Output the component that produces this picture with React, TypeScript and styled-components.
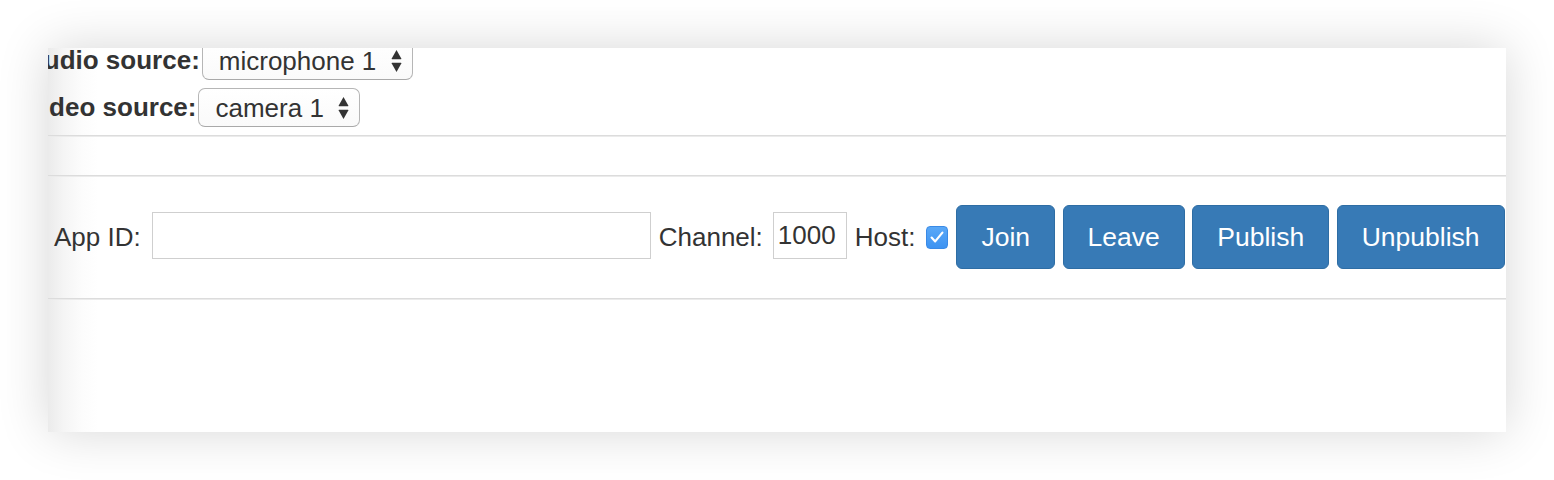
import React from "react";
import styled, { createGlobalStyle } from "styled-components";

const GlobalStyle = createGlobalStyle`
  html, body { margin: 0; padding: 0; background: #fff; }
  body {
    font-family: "Liberation Sans", Arial, Helvetica, sans-serif;
    color: #333;
  }
  * { box-sizing: border-box; }
`;

const Stage = styled.div`
  width: 1554px;
  height: 480px;
  padding: 48px;
  background: #fff;
  overflow: hidden;
`;

const Window = styled.div`
  width: 1458px;
  height: 384px;
  overflow: hidden;
  background: linear-gradient(to right, #ebebeb 0px, #f5f5f5 16px, #fcfcfc 34px, #fff 50px);
  box-shadow: 0 0 48px rgba(0, 0, 0, 0.16);
`;

const Sources = styled.section`
  display: flex;
  flex-direction: column;
  gap: 8px;
  margin: -7px 0 0 -23px;
  padding-bottom: 8px;
`;

const SourceRow = styled.div`
  display: flex;
  align-items: center;
`;

const SourceLabel = styled.label`
  font-weight: 700;
  font-size: 26px;
  white-space: nowrap;
  margin-right: 2px;
`;

const SelectBox = styled.div`
  display: inline-flex;
  align-items: center;
  height: 39px;
  padding: 0 10px 0 16px;
  gap: 14px;
  border: 1px solid #b6b6b6;
  border-bottom-color: #a9a9a9;
  border-radius: 7px;
  background: linear-gradient(#ffffff, #fafafa);
`;

const NativeSelect = styled.select`
  appearance: none;
  -webkit-appearance: none;
  border: 0;
  margin: 0;
  padding: 0;
  background: transparent;
  font-family: inherit;
  font-size: 26px;
  color: #333;
  outline: none;
`;

const Divider = styled.hr`
  margin: 0;
  height: 0;
  border: 0;
  border-top: 1px solid #dcdcdc;
  border-bottom: 1px solid #ebebeb;
`;

const Blank = styled.div<{ $h: number }>`
  height: ${(p) => p.$h}px;
`;

const Controls = styled.div`
  display: flex;
  align-items: center;
  padding: 28px 0 29px 6px;
  font-size: 26px;
  white-space: nowrap;
`;

const FieldLabel = styled.label`
  margin: 0 10px 0 8px;
  &:first-child {
    margin-left: 0;
    margin-right: 11px;
  }
`;

const TextInput = styled.input<{ $w: number }>`
  width: ${(p) => p.$w}px;
  height: 47px;
  margin: 0 0 3px 0;
  padding: 0 4px;
  border: 1px solid #cfcfcf;
  border-radius: 0;
  background: #fff;
  font-family: inherit;
  font-size: 26px;
  color: #333;
  outline: none;
`;

const Check = styled.span`
  display: inline-flex;
  align-items: center;
  justify-content: center;
  width: 22px;
  height: 23px;
  margin-left: 1px;
  border-radius: 4px;
  background: linear-gradient(#5aa8f7, #3d93f2);
  border: 1px solid #3a8ae6;
`;

const Buttons = styled.div`
  display: flex;
  gap: 7.5px;
  margin-left: 8px;
`;

const Button = styled.button`
  height: 64px;
  padding: 0 24px;
  border: 1px solid #2e6da4;
  border-radius: 6px;
  background: #377ab6;
  color: #fff;
  font-family: inherit;
  font-size: 26.5px;
  cursor: pointer;
`;

const Arrows = () => (
  <svg width="11" height="24" viewBox="0 0 11 24" aria-hidden="true">
    <path d="M5.5 1 L10.3 9.6 Q10.6 10.2 9.9 10.2 L1.1 10.2 Q0.4 10.2 0.7 9.6 Z" fill="#333" />
    <path d="M5.5 23 L10.3 14.4 Q10.6 13.8 9.9 13.8 L1.1 13.8 Q0.4 13.8 0.7 14.4 Z" fill="#333" />
  </svg>
);

const CheckMark = () => (
  <svg width="18" height="18" viewBox="0 0 18 18" aria-hidden="true">
    <path d="M3.6 9.6 L7.2 13.4 L14.4 4.6" fill="none" stroke="#fff" strokeWidth="2.2" strokeLinecap="round" strokeLinejoin="round" />
  </svg>
);

export default function App() {
  return (
    <>
      <GlobalStyle />
      <Stage>
        <Window>
          <Sources>
            <SourceRow>
              <SourceLabel>Audio source:</SourceLabel>
              <SelectBox>
                <NativeSelect defaultValue="mic1">
                  <option value="mic1">microphone 1</option>
                </NativeSelect>
                <Arrows />
              </SelectBox>
            </SourceRow>
            <SourceRow>
              <SourceLabel>Video source:</SourceLabel>
              <SelectBox>
                <NativeSelect defaultValue="cam1">
                  <option value="cam1">camera 1</option>
                </NativeSelect>
                <Arrows />
              </SelectBox>
            </SourceRow>
          </Sources>
          <Divider />
          <Blank $h={38} />
          <Divider />
          <Controls>
            <FieldLabel>App ID:</FieldLabel>
            <TextInput $w={499} type="text" defaultValue="" />
            <FieldLabel>Channel:</FieldLabel>
            <TextInput $w={74} type="text" defaultValue="1000" />
            <FieldLabel>Host:</FieldLabel>
            <Check>
              <CheckMark />
            </Check>
            <Buttons>
              <Button>Join</Button>
              <Button>Leave</Button>
              <Button>Publish</Button>
              <Button>Unpublish</Button>
            </Buttons>
          </Controls>
          <Divider />
        </Window>
      </Stage>
    </>
  );
}
